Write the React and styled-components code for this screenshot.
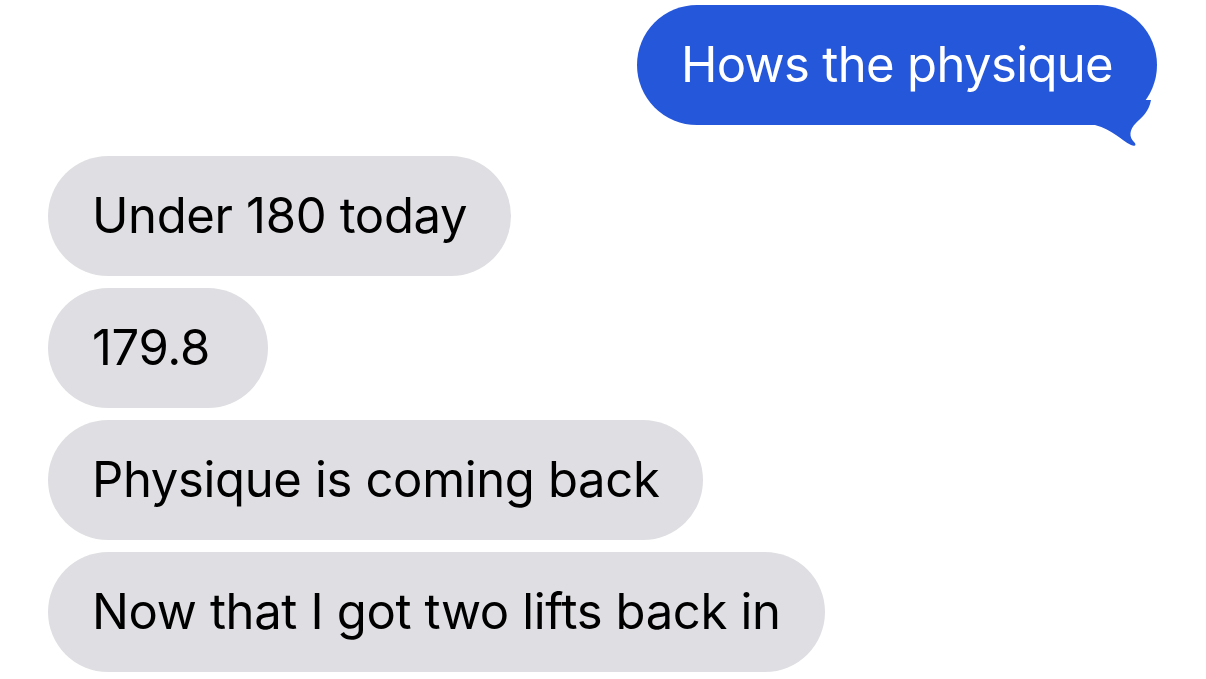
import React from "react";
import styled, { createGlobalStyle } from "styled-components";

const Global = createGlobalStyle`
  html, body { margin: 0; padding: 0; background: #ffffff; }
  body { font-family: Inter, "Noto Sans", "Liberation Sans", sans-serif; }
`;

const Thread = styled.div`
  width: 1206px;
  height: 679px;
  box-sizing: border-box;
  padding: 5px 49px 0 48px;
  display: flex;
  flex-direction: column;
  gap: 12px;
  overflow: hidden;
`;

const Row = styled.div`
  display: flex;
  justify-content: ${(p) => (p.$sent ? "flex-end" : "flex-start")};
  margin-bottom: ${(p) => (p.$sent ? "19px" : "0")};
`;

const Bubble = styled.div`
  position: relative;
  height: 120px;
  min-width: 220px;
  box-sizing: border-box;
  padding: 0 44px 2px;
  border-radius: 60px;
  display: flex;
  align-items: center;
  font-size: 49px;
  letter-spacing: ${(p) => (p.$sent ? "-0.65px" : "-0.35px")};
  white-space: nowrap;
  background: ${(p) => (p.$sent ? "#2557db" : "#dfdfe3")};
  color: ${(p) => (p.$sent ? "#ffffff" : "#000000")};
`;

const Tail = styled.svg`
  position: absolute;
  right: 0;
  bottom: -25px;
  width: 80px;
  height: 50px;
  overflow: visible;
`;

const received = [
  "Under 180 today",
  "179.8",
  "Physique is coming back",
  "Now that I got two lifts back in",
];

export default function App() {
  return (
    <>
      <Global />
      <Thread>
        <Row $sent>
          <Bubble $sent>
            Hows the physique
            <Tail viewBox="0 0 80 50">
              <path
                d="M 0 0 H 74 C 72 12, 64 18, 59 23 C 52 30, 52 37, 57 42 C 60 45, 58 47, 54 45 C 44 40, 36 30, 18 25 H 0 Z"
                fill="#2557db"
              />
            </Tail>
          </Bubble>
        </Row>
        {received.map((t) => (
          <Row key={t}>
            <Bubble>{t}</Bubble>
          </Row>
        ))}
      </Thread>
    </>
  );
}
